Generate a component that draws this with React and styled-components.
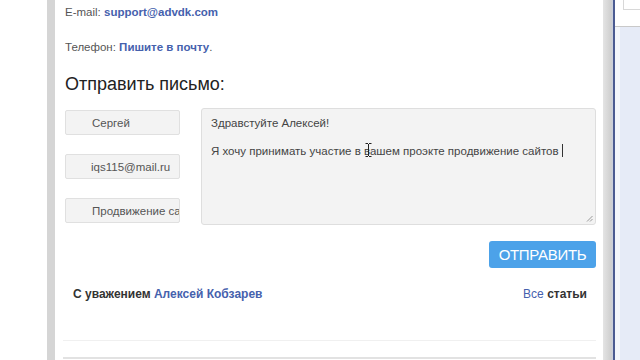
import React from "react";
import styled, { createGlobalStyle } from "styled-components";

const Global = createGlobalStyle`
  html, body { margin: 0; padding: 0; background: #ffffff; }
  body { font-family: "Liberation Sans", Arial, sans-serif; }
  * { box-sizing: border-box; }
`;

const Page = styled.div`
  display: flex;
  width: 640px;
  height: 360px;
  overflow: hidden;
  background: #ffffff;
`;

const Gutter = styled.div`
  width: 47px;
  flex: none;
  background: #ffffff;
`;

const LeftRail = styled.div`
  width: 8px;
  flex: none;
  background: #d5d5d5;
`;

const Main = styled.main`
  width: 548px;
  flex: none;
  display: flex;
  flex-direction: column;
  padding: 4px 7px 0 10px;
  background: #ffffff;
`;

const InfoLine = styled.p`
  margin: 0 0 ${(p) => p.$gap || 0}px;
  font-size: 11.5px;
  line-height: 16px;
  color: #555555;
`;

const Link = styled.a`
  color: #4561ad;
  font-weight: ${(p) => (p.$bold ? 700 : 400)};
  text-decoration: none;
`;

const Heading = styled.h2`
  margin: 0 0 12px;
  font-size: 18px;
  line-height: 24px;
  font-weight: 400;
  color: #222222;
`;

const FormRow = styled.div`
  display: flex;
  gap: 21px;
  align-items: flex-start;
`;

const Fields = styled.div`
  width: 115px;
  flex: none;
  display: flex;
  flex-direction: column;
  gap: 19px;
  padding-top: 2px;
`;

const Field = styled.input`
  width: 115px;
  height: 25px;
  border: 1px solid #e0e0e0;
  border-radius: 2px;
  background: #f3f3f3;
  padding: 0 0 0 ${(p) => p.$indent || 26}px;
  font-family: "Liberation Sans", Arial, sans-serif;
  font-size: 11.5px;
  color: #555555;
  outline: none;
`;

const MessageBox = styled.div`
  position: relative;
  flex: 1;
  height: 117px;
  border: 1px solid #dedede;
  border-radius: 3px;
  background: #f3f3f3;
  padding: 7px 9px;
  font-size: 11.5px;
  line-height: 14px;
  color: #444444;
`;

const MsgLine = styled.div`
  margin-bottom: ${(p) => p.$gap || 0}px;
  white-space: nowrap;
`;

const Caret = styled.span`
  display: inline-block;
  width: 1px;
  height: 13px;
  background: #333;
  vertical-align: -2px;
  margin-left: 3px;
`;

const IBeam = styled.svg`
  position: absolute;
  left: 163px;
  top: 34px;
`;

const Grip = styled.svg`
  position: absolute;
  right: 2px;
  bottom: 2px;
`;

const ButtonRow = styled.div`
  display: flex;
  justify-content: flex-end;
  margin-top: 16px;
`;

const SendButton = styled.button`
  width: 107px;
  height: 27px;
  border: none;
  border-radius: 3px;
  background: #4ca2e9;
  color: #ffffff;
  font-family: "Liberation Sans", Arial, sans-serif;
  font-size: 15px;
  letter-spacing: -0.3px;
  padding: 0;
`;

const Footer = styled.div`
  display: flex;
  justify-content: space-between;
  align-items: center;
  margin-top: 18px;
  padding: 0 9px 0 8px;
  font-size: 12px;
  line-height: 16px;
  font-weight: 700;
  color: #333333;
`;

const Divider = styled.div`
  margin: 38px 0 0 -2px;
  height: 1px;
  background: #f0f0f0;
`;

const BottomLine = styled.div`
  margin: 16px 0 0 -2px;
  height: 2px;
  background: #e2e2e2;
`;

const RightRail = styled.div`
  width: 12px;
  flex: none;
  background: linear-gradient(to right, #e4e4e4 0, #cfcfcf 8px, #c8cfe0 10px, #4b5b92 10px, #4b5b92 12px);
`;

const Side = styled.aside`
  flex: 1;
  display: flex;
  flex-direction: column;
  background: #ffffff;
`;

const SideTop = styled.div`
  height: 27px;
  border-bottom: 1px solid #c9c9c9;
  padding-left: 8px;
`;

const SideBox = styled.div`
  height: 10px;
  border-left: 1px solid #d8d8d8;
  border-bottom: 1px solid #d8d8d8;
`;

const SideBody = styled.div`
  flex: 1;
  background: linear-gradient(to right, #f3f6fc 0, #f3f6fc 5px, #e6ebf7 5px);
`;

export default function App() {
  return (
    <>
      <Global />
      <Page>
        <Gutter />
        <LeftRail />
        <Main>
          <InfoLine $gap={19}>
            E-mail: <Link $bold href="#">support@advdk.com</Link>
          </InfoLine>
          <InfoLine $gap={17}>
            Телефон: <Link $bold href="#">Пишите в почту</Link>.
          </InfoLine>
          <Heading>Отправить письмо:</Heading>
          <FormRow>
            <Fields>
              <Field readOnly value="Сергей" />
              <Field readOnly value="iqs115@mail.ru" $indent={25} />
              <Field readOnly value="Продвижение сайтов" />
            </Fields>
            <MessageBox>
              <MsgLine $gap={14}>Здравстуйте Алексей!</MsgLine>
              <MsgLine>
                Я хочу принимать участие в вашем проэкте продвижение сайтов
                <Caret />
              </MsgLine>
              <IBeam width="7" height="14" viewBox="0 0 7 14">
                <path d="M0.5 0.5h2.5M4 0.5h2.5M3.5 1v12M0.5 13.5h2.5M4 13.5h2.5" stroke="#222" strokeWidth="1" fill="none" />
              </IBeam>
              <Grip width="7" height="7" viewBox="0 0 7 7">
                <path d="M1 6.5L6.5 1M4 6.5L6.5 4" stroke="#999" strokeWidth="1" fill="none" />
              </Grip>
            </MessageBox>
          </FormRow>
          <ButtonRow>
            <SendButton>ОТПРАВИТЬ</SendButton>
          </ButtonRow>
          <Footer>
            <span>
              С уважением <Link $bold href="#">Алексей Кобзарев</Link>
            </span>
            <span>
              <Link href="#">Все</Link> статьи
            </span>
          </Footer>
          <Divider />
          <BottomLine />
        </Main>
        <RightRail />
        <Side>
          <SideTop>
            <SideBox />
          </SideTop>
          <SideBody />
        </Side>
      </Page>
    </>
  );
}
